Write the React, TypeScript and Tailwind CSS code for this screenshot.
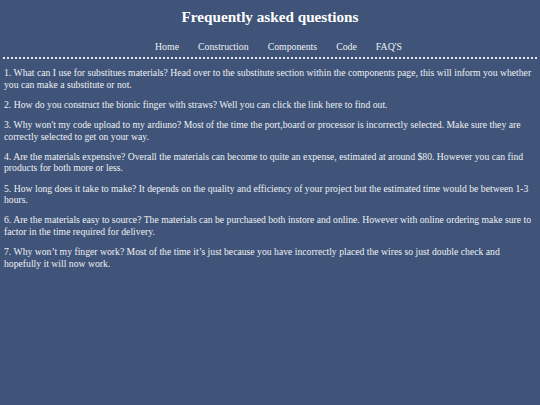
import React from "react";

const faqs = [
  "1. What can I use for substitues materials? Head over to the substitute section within the components page, this will inform you whether you can make a substitute or not.",
  "2. How do you construct the bionic finger with straws? Well you can click the link here to find out.",
  "3. Why won't my code upload to my ardiuno? Most of the time the port,board or processor is incorrectly selected. Make sure they are correctly selected to get on your way.",
  "4. Are the materials expensive? Overall the materials can become to quite an expense, estimated at around $80. However you can find products for both more or less.",
  "5. How long does it take to make? It depends on the quality and efficiency of your project but the estimated time would be between 1-3 hours.",
  "6. Are the materials easy to source? The materials can be purchased both instore and online. However with online ordering make sure to factor in the time required for delivery.",
  "7. Why won\u2019t my finger work? Most of the time it\u2019s just because you have incorrectly placed the wires so just double check and hopefully it will now work.",
];

export default function App() {
  return (
    <div
      className="min-h-[405px] w-[540px] bg-[#3f5478] text-[#eef0f4]"
      style={{ fontFamily: '"Liberation Serif", "Times New Roman", serif' }}
    >
      <h1 className="pt-[7px] text-center text-[15.2px] font-bold leading-[20px] text-white">
        Frequently asked questions
      </h1>
      <nav className="mt-[13px] flex justify-center gap-[19px] pl-[17px] text-[9.8px] leading-[14px]">
        <span>Home</span>
        <span>Construction</span>
        <span>Components</span>
        <span>Code</span>
        <span>FAQ'S</span>
      </nav>
      <div className="mx-[3px] mt-[3px] border-b-2 border-dotted border-[#e6e8ee]" />
      <div className="px-[4px] pt-[8px] text-[9.7px] leading-[11.5px]">
        {faqs.map((f, i) => (
          <p key={i} className="mb-[8.75px]">
            {f}
          </p>
        ))}
      </div>
    </div>
  );
}
